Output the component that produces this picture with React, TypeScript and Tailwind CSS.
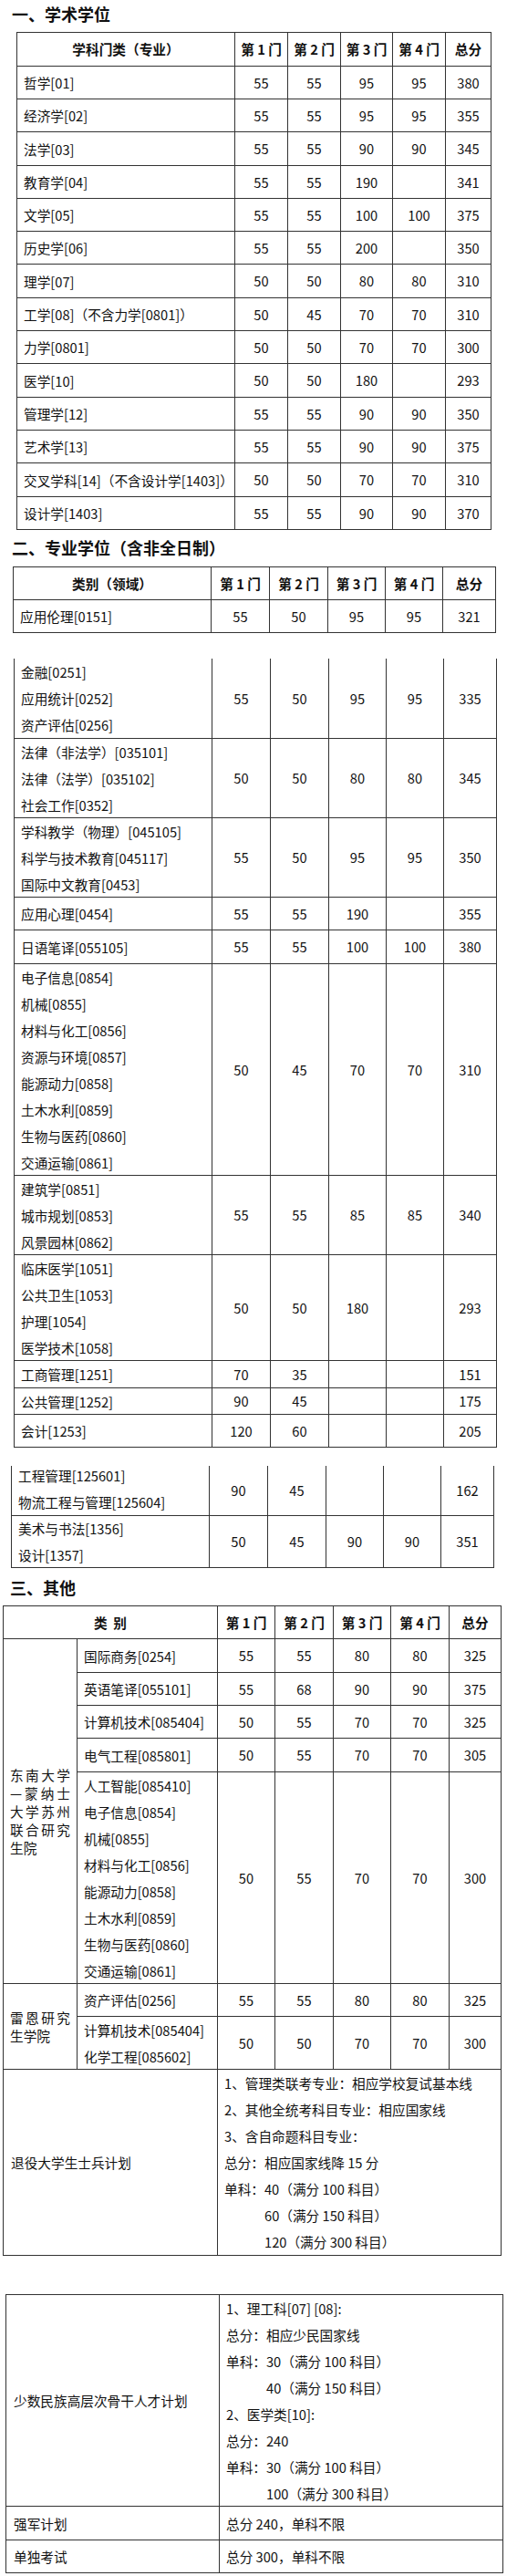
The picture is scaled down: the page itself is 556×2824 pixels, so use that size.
import React from "react";

type Row = [string[], string, string, string, string, string];

const BASE = "bg-white";
const TXT = "bg-white flex flex-col justify-center px-[7px] leading-[29px] whitespace-nowrap";
const NUM = "bg-white flex items-center justify-center";
const HEAD = "bg-white flex items-center justify-center font-bold whitespace-nowrap";

function Title({ text, cls }: { text: string; cls: string }) {
  return <div className={`text-[18px] font-bold leading-[24px] ${cls}`}>{text}</div>;
}

function Lines({ lines }: { lines: string[] }) {
  return (
    <>
      {lines.map((l, i) => (
        <div key={i}>{l}</div>
      ))}
    </>
  );
}

function Nums({ vals }: { vals: string[] }) {
  return (
    <>
      {vals.map((v, i) => (
        <div key={i} className={NUM}>
          {v}
        </div>
      ))}
    </>
  );
}

const t1: [string, string, string, string, string, string][] = [
  ["哲学[01]", "55", "55", "95", "95", "380"],
  ["经济学[02]", "55", "55", "95", "95", "355"],
  ["法学[03]", "55", "55", "90", "90", "345"],
  ["教育学[04]", "55", "55", "190", "", "341"],
  ["文学[05]", "55", "55", "100", "100", "375"],
  ["历史学[06]", "55", "55", "200", "", "350"],
  ["理学[07]", "50", "50", "80", "80", "310"],
  ["工学[08]（不含力学[0801]）", "50", "45", "70", "70", "310"],
  ["力学[0801]", "50", "50", "70", "70", "300"],
  ["医学[10]", "50", "50", "180", "", "293"],
  ["管理学[12]", "55", "55", "90", "90", "350"],
  ["艺术学[13]", "55", "55", "90", "90", "375"],
  ["交叉学科[14]（不含设计学[1403]）", "50", "50", "70", "70", "310"],
  ["设计学[1403]", "55", "55", "90", "90", "370"],
];

const t2b: Row[] = [
  [["金融[0251]", "应用统计[0252]", "资产评估[0256]"], "55", "50", "95", "95", "335"],
  [["法律（非法学）[035101]", "法律（法学）[035102]", "社会工作[0352]"], "50", "50", "80", "80", "345"],
  [["学科教学（物理）[045105]", "科学与技术教育[045117]", "国际中文教育[0453]"], "55", "50", "95", "95", "350"],
  [["应用心理[0454]"], "55", "55", "190", "", "355"],
  [["日语笔译[055105]"], "55", "55", "100", "100", "380"],
  [
    [
      "电子信息[0854]",
      "机械[0855]",
      "材料与化工[0856]",
      "资源与环境[0857]",
      "能源动力[0858]",
      "土木水利[0859]",
      "生物与医药[0860]",
      "交通运输[0861]",
    ],
    "50",
    "45",
    "70",
    "70",
    "310",
  ],
  [["建筑学[0851]", "城市规划[0853]", "风景园林[0862]"], "55", "55", "85", "85", "340"],
  [["临床医学[1051]", "公共卫生[1053]", "护理[1054]", "医学技术[1058]"], "50", "50", "180", "", "293"],
  [["工商管理[1251]"], "70", "35", "", "", "151"],
  [["公共管理[1252]"], "90", "45", "", "", "175"],
  [["会计[1253]"], "120", "60", "", "", "205"],
];

const heads = ["第 1 门", "第 2 门", "第 3 门", "第 4 门", "总分"];

function Indent({ children }: { children: React.ReactNode }) {
  return <div className="pl-[44px]">{children}</div>;
}

export default function App() {
  return (
    <div className="w-[556px] bg-white pb-[3px] font-['Noto_Sans_CJK_SC',sans-serif] text-[14.67px] text-[#111]">
      {/* 一、学术学位 */}
      <div className="h-[35px] pt-[3px]">
        <Title text="一、学术学位" cls="pl-[13px]" />
      </div>
      <div className="ml-[18px] grid w-fit grid-cols-[238px_57px_57px_56px_57px_49px] grid-rows-[36px_35px_35px_36px_35px_35px_35px_36px_35px_35px_36px_35px_35px_36px_35px] gap-px bg-[#333] p-px">
        <div className={HEAD}>学科门类（专业）</div>
        {heads.map((h) => (
          <div key={h} className={HEAD}>
            {h}
          </div>
        ))}
        {t1.map((r) => (
          <React.Fragment key={r[0]}>
            <div className={TXT}>{r[0]}</div>
            <Nums vals={r.slice(1)} />
          </React.Fragment>
        ))}
      </div>

      {/* 二、专业学位 */}
      <div className="h-[40px] pt-[7px]">
        <Title text="二、专业学位（含非全日制）" cls="pl-[13px]" />
      </div>
      <div className="ml-[14px] grid w-fit grid-cols-[216px_63px_63px_62px_62px_57px] grid-rows-[35px_35px] gap-px bg-[#333] p-px">
        <div className={HEAD}>类别（领域）</div>
        {heads.map((h) => (
          <div key={h} className={HEAD}>
            {h}
          </div>
        ))}
        <div className={TXT}>应用伦理[0151]</div>
        <Nums vals={["55", "50", "95", "95", "321"]} />
      </div>
      <div className="h-[28px]" />
      <div className="ml-[15px] grid w-fit grid-cols-[216px_63px_63px_62px_62px_57px] grid-rows-[87px_86px_86px_35px_36px_231px_86px_115px_29px_28px_35px] gap-px bg-[#333] px-px pb-px">
        {t2b.map((r) => (
          <React.Fragment key={r[0][0]}>
            <div className={TXT}>
              <Lines lines={r[0]} />
            </div>
            <Nums vals={[r[1], r[2], r[3], r[4], r[5]]} />
          </React.Fragment>
        ))}
      </div>
      <div className="h-[20px]" />
      <div className="ml-[12px] grid w-fit grid-cols-[216px_63px_63px_62px_62px_57px] grid-rows-[54px_56px] gap-px bg-[#333] px-px pb-px">
        <div className="flex flex-col justify-start overflow-visible bg-white px-[7px] leading-[29px] whitespace-nowrap">
          <div className="-mt-[4px]">
            <div>工程管理[125601]</div>
            <div>物流工程与管理[125604]</div>
          </div>
        </div>
        <Nums vals={["90", "45", "", "", "162"]} />
        <div className={TXT}>
          <Lines lines={["美术与书法[1356]", "设计[1357]"]} />
        </div>
        <Nums vals={["50", "45", "90", "90", "351"]} />
      </div>

      {/* 三、其他 */}
      <div className="h-[41px] pt-[9px]">
        <Title text="三、其他" cls="pl-[11px]" />
      </div>
      <div className="ml-[3px] grid w-fit grid-cols-[80px_153px_62px_63px_62px_63px_56px] grid-rows-[35px_36px_35px_35px_36px_231px_35px_57px_203px] gap-px bg-[#333] p-px">
        <div className={`${HEAD} col-span-2`}>类&nbsp;&nbsp;别</div>
        {heads.map((h) => (
          <div key={h} className={HEAD}>
            {h}
          </div>
        ))}

        <div className="row-span-5 flex items-center bg-white px-[7px]">
          <div className="w-full text-justify leading-[20px]">东南大学—蒙纳士大学苏州联合研究生院</div>
        </div>
        <div className={TXT}>国际商务[0254]</div>
        <Nums vals={["55", "55", "80", "80", "325"]} />
        <div className={TXT}>英语笔译[055101]</div>
        <Nums vals={["55", "68", "90", "90", "375"]} />
        <div className={TXT}>计算机技术[085404]</div>
        <Nums vals={["50", "55", "70", "70", "325"]} />
        <div className={TXT}>电气工程[085801]</div>
        <Nums vals={["50", "55", "70", "70", "305"]} />
        <div className={TXT}>
          <Lines
            lines={[
              "人工智能[085410]",
              "电子信息[0854]",
              "机械[0855]",
              "材料与化工[0856]",
              "能源动力[0858]",
              "土木水利[0859]",
              "生物与医药[0860]",
              "交通运输[0861]",
            ]}
          />
        </div>
        <Nums vals={["50", "55", "70", "70", "300"]} />

        <div className="row-span-2 flex items-center bg-white px-[7px]">
          <div className="w-full text-justify leading-[20px]">雷恩研究生学院</div>
        </div>
        <div className={TXT}>资产评估[0256]</div>
        <Nums vals={["55", "55", "80", "80", "325"]} />
        <div className={TXT}>
          <Lines lines={["计算机技术[085404]", "化学工程[085602]"]} />
        </div>
        <Nums vals={["50", "50", "70", "70", "300"]} />

        <div className={`${TXT} col-span-2 px-[8px]`}>退役大学生士兵计划</div>
        <div className={`${TXT} col-span-5`}>
          <div>1、管理类联考专业：相应学校复试基本线</div>
          <div>2、其他全统考科目专业：相应国家线</div>
          <div>3、含自命题科目专业：</div>
          <div>总分：相应国家线降 15 分</div>
          <div>单科：40（满分 100 科目）</div>
          <Indent>60（满分 150 科目）</Indent>
          <Indent>120（满分 300 科目）</Indent>
        </div>
      </div>

      <div className="h-[42px]" />
      <div className="ml-[6px] grid w-fit grid-cols-[233px_310px] grid-rows-[231px_36px_35px] gap-px bg-[#333] p-px">
        <div className={`${TXT} px-[8px]`}>少数民族高层次骨干人才计划</div>
        <div className={TXT}>
          <div>1、理工科[07] [08]:</div>
          <div>总分：相应少民国家线</div>
          <div>单科：30（满分 100 科目）</div>
          <Indent>40（满分 150 科目）</Indent>
          <div>2、医学类[10]:</div>
          <div>总分：240</div>
          <div>单科：30（满分 100 科目）</div>
          <Indent>100（满分 300 科目）</Indent>
        </div>
        <div className={`${TXT} px-[8px]`}>强军计划</div>
        <div className={TXT}>总分 240，单科不限</div>
        <div className={`${TXT} px-[8px]`}>单独考试</div>
        <div className={TXT}>总分 300，单科不限</div>
      </div>
      <div className={BASE} />
    </div>
  );
}
